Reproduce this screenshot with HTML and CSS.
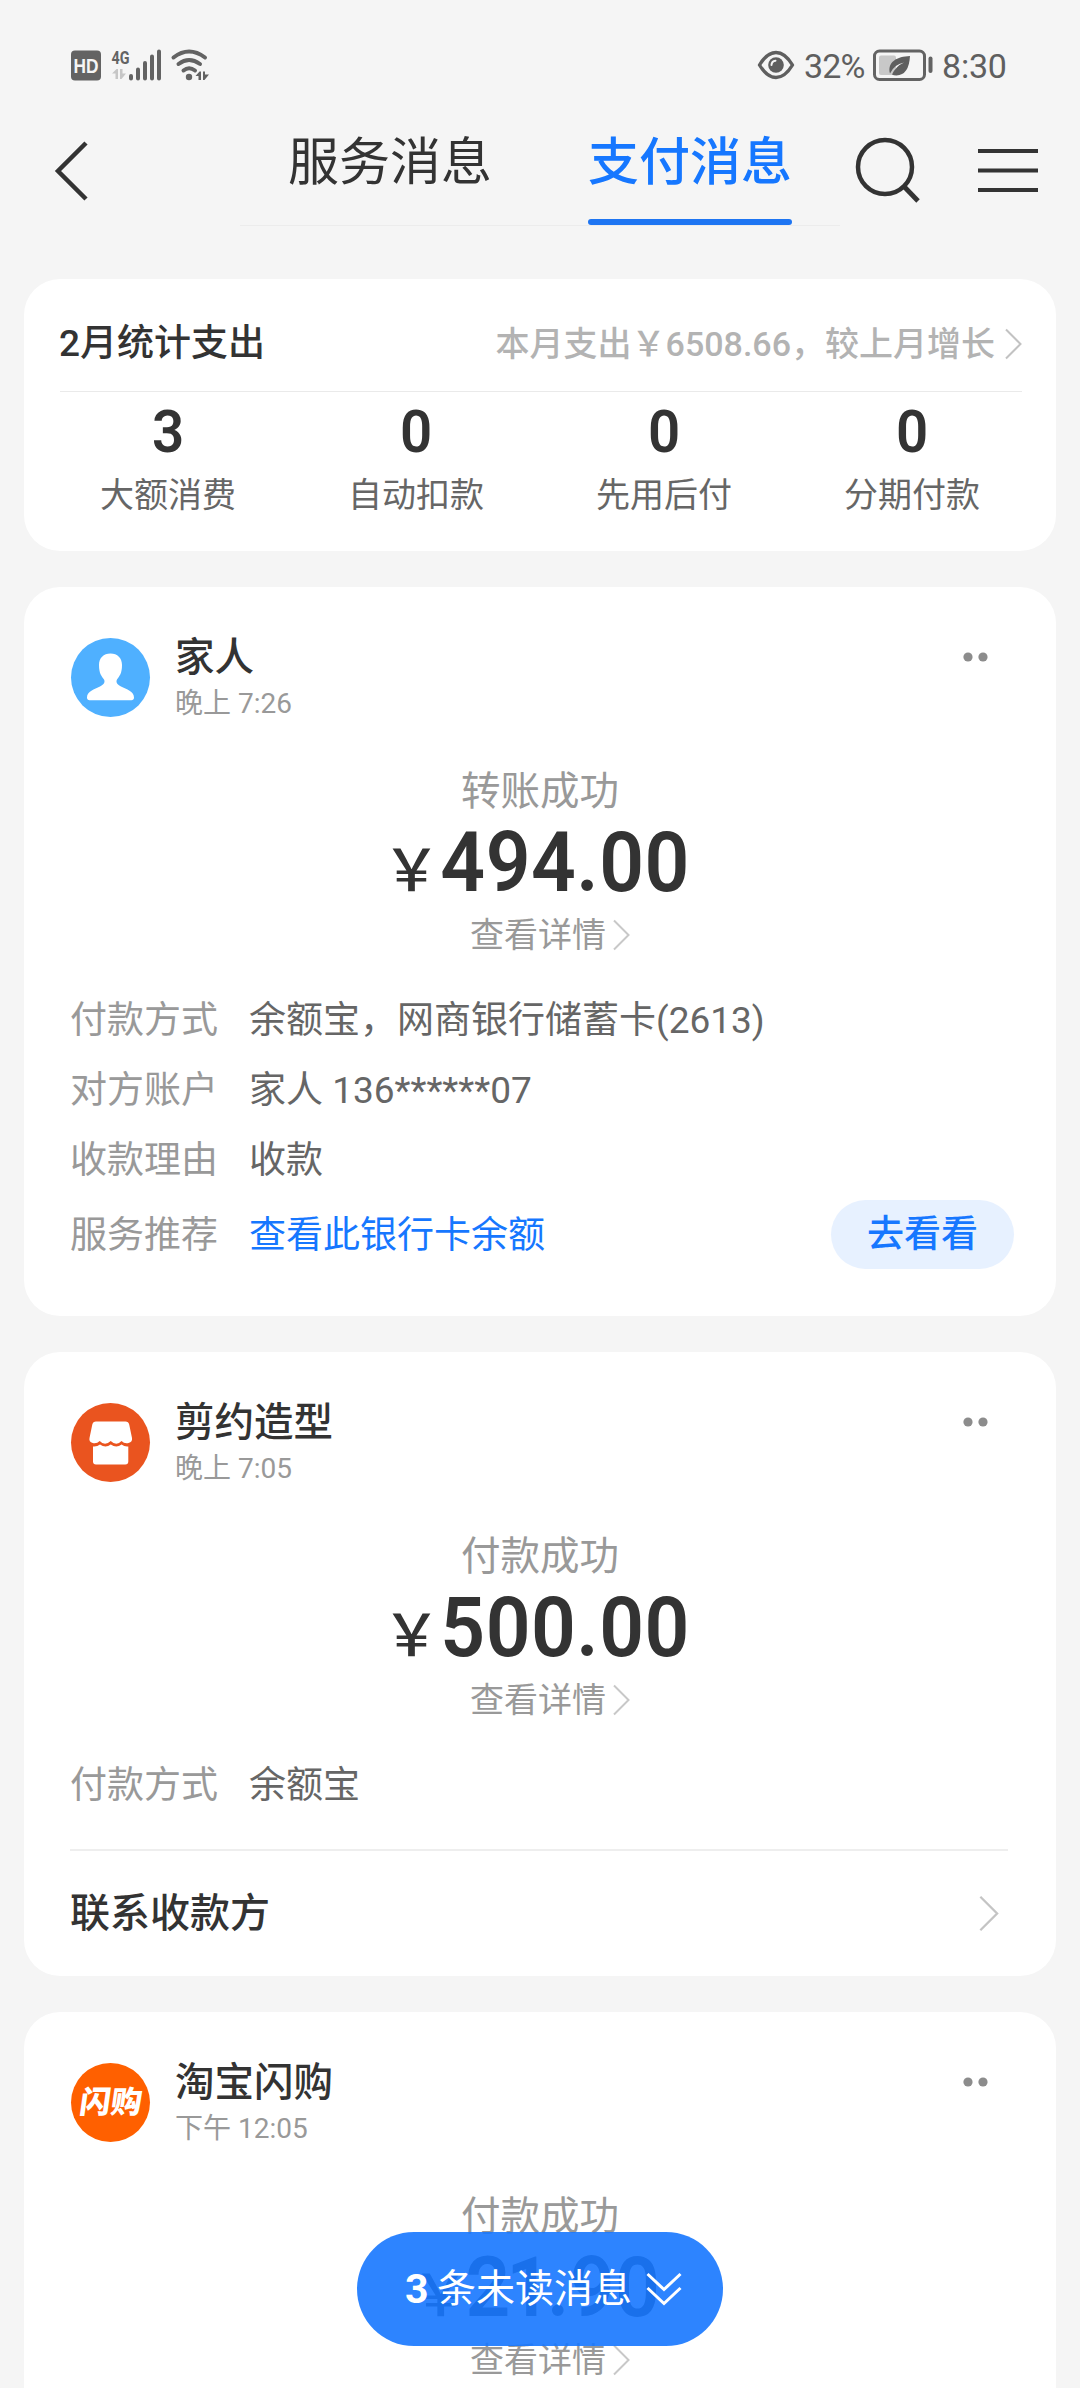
FILE: index.html
```html
<!DOCTYPE html>
<html lang="zh-CN">
<head>
<meta charset="utf-8">
<title>支付消息</title>
<link rel="stylesheet" href="styles.css">
</head>
<body>
<svg class="defs" width="0" height="0">
  <symbol id="chevron" viewBox="0 0 17 32"><path d="M1 1.5 15.5 16 1 30.5" fill="none" stroke="currentColor" stroke-width="2"/></symbol>
  <symbol id="dots" viewBox="0 0 26 10"><circle cx="5" cy="5" r="4.6" fill="currentColor"/><circle cx="20" cy="5" r="4.6" fill="currentColor"/></symbol>
</svg>

<div class="statusbar">
  <div class="status-left">
    <svg width="140" height="34" viewBox="0 0 140 34">
      <rect x="0" y="2.500" width="30" height="30" rx="4" fill="#636363"/>
      <text class="hd" x="2.6" y="24.7" textLength="25" lengthAdjust="spacingAndGlyphs">HD</text>
      <text class="net" x="40.5" y="15.500" textLength="18" lengthAdjust="spacingAndGlyphs">4G</text>
      <g fill="#c6c6c6">
        <path d="M41 25.500l4.5-4.5h1.5v10h-2.5V25.500zM49 21h2.500v4.500H55l-4.500 5.500H49z"/>
      </g>
      <g stroke="#636363" stroke-width="4" stroke-linecap="round">
        <path d="M60 28v2.500M67 21.500v9M74 15v15.500M81 8.500v22M88 3.500v27"/>
      </g>
      <g fill="none" stroke="#636363" stroke-width="4" stroke-linecap="round">
        <path d="M102.500 9.500Q118 -2.500 134 9.500"/>
        <path d="M107.500 16Q118 8 129 16"/>
        <path d="M112.500 22.500Q118 18 124 22.500"/>
      </g>
      <circle cx="118" cy="29" r="3.200" fill="#636363"/>
      <path d="M124.500 28l4-4.500h1.500v8.500h-2.500v-4zM132 23.500h2v3h4l-4.500 5.500H132z" fill="#636363"/>
    </svg>
  </div>
  <div class="status-right">
    <svg width="38" height="32" viewBox="0 0 38 32">
      <path d="M2.500 16Q10 3.500 19 3.500T35.500 16Q28 28.500 19 28.500T2.500 16z" fill="none" stroke="#5f5f5f" stroke-width="3.400" stroke-linejoin="round"/>
      <circle cx="19" cy="16" r="7.800" fill="#5f5f5f"/>
      <path d="M14.500 16a4.500 4.500 0 0 1 4-4.300" fill="none" stroke="#f5f5f5" stroke-width="2" stroke-linecap="round"/>
    </svg>
    <span class="battery-text">32%</span>
    <svg width="62" height="34" viewBox="0 0 62 34">
      <rect x="1.500" y="3" width="50" height="28.500" rx="5" fill="none" stroke="#636363" stroke-width="3"/>
      <rect x="6" y="7.500" width="17" height="19.500" rx="2" fill="#c8c8c8"/>
      <path d="M37 8Q36 27 23.500 27.500q-3 0-4.500-1Q23 18 31 14.500 21 16.500 17 25.500C14 14 24 8.500 37 8z" fill="#5f5f5f"/>
      <path d="M57.500 10.500v12.500" stroke="#636363" stroke-width="4" stroke-linecap="round"/>
    </svg>
    <span class="clock">8:30</span>
  </div>
</div>

<header class="nav">
  <svg class="back" width="36" height="60" viewBox="0 0 36 60"><path d="M34 2 6 30l28 28" fill="none" stroke="#333" stroke-width="4.500"/></svg>
  <nav class="tabs">
    <span class="tab">服务消息</span>
    <span class="tab tab-active">支付消息</span>
  </nav>
  <div class="nav-actions">
    <svg width="66" height="70" viewBox="0 0 66 70"><circle cx="31" cy="32" r="27" fill="none" stroke="#333" stroke-width="4.500"/><path d="M50.500 52 64 66" stroke="#333" stroke-width="4.800"/></svg>
    <svg width="60" height="46" viewBox="0 0 60 46"><path d="M0 3h60M0 22.500h60M0 42h60" stroke="#333" stroke-width="4.200"/></svg>
  </div>
</header>

<main class="feed">
  <section class="card stats">
    <div class="stats-head">
      <span class="stats-title">2月统计支出</span>
      <span class="stats-more">本月支出￥6508.66，较上月增长<svg class="chev" width="17" height="32"><use href="#chevron"/></svg></span>
    </div>
    <div class="stats-grid">
      <div class="stat"><b>3</b><span>大额消费</span></div>
      <div class="stat"><b>0</b><span>自动扣款</span></div>
      <div class="stat"><b>0</b><span>先用后付</span></div>
      <div class="stat"><b>0</b><span>分期付款</span></div>
    </div>
  </section>

  <section class="card bill">
    <div class="bill-head">
      <svg class="avatar" viewBox="0 0 79 79"><circle cx="39.500" cy="39.500" r="39.500" fill="#4fb0ff"/><path d="M39.500 15.500c-7 0-11.500 4.500-11.500 11.500 0 8.500 2.500 11 5 14.500 1.500 3-.5 5-4 7C23.500 51.500 16 53 16 59.500c0 2 1 2.700 2.500 2.700h42c1.500 0 2.500-.7 2.500-2.700 0-6.500-7.500-8-13-11-3.500-2-5.500-4-4-7 2.500-3.500 5-6 5-14.500 0-7-4.500-11.500-11.500-11.500z" fill="#fff"/></svg>
      <div class="who"><div class="name">家人</div><div class="time">晚上 7:26</div></div>
      <svg class="dots" width="26" height="10"><use href="#dots"/></svg>
    </div>
    <div class="result">转账成功</div>
    <div class="amount"><span class="yen">￥</span><span class="digits">494.00</span></div>
    <div class="detail">查看详情<svg class="chev" width="17" height="32"><use href="#chevron"/></svg></div>
    <div class="rows">
      <div class="row"><span class="label">付款方式</span><span class="value">余额宝，网商银行储蓄卡(2613)</span></div>
      <div class="row"><span class="label">对方账户</span><span class="value">家人 136******07</span></div>
      <div class="row"><span class="label">收款理由</span><span class="value">收款</span></div>
      <div class="row row-service"><span class="label">服务推荐</span><span class="value link">查看此银行卡余额</span><span class="button">去看看</span></div>
    </div>
  </section>

  <section class="card bill bill-contact">
    <div class="bill-head">
      <svg class="avatar" viewBox="0 0 79 79"><circle cx="39.500" cy="39.500" r="39.500" fill="#ea541f"/><path d="M25 18.500h29.500q3 0 3.700 3L61 35q.7 4-3.500 5-4 1-7-2-5 5.500-10.800 0-5.800 5.500-11 0-3 3-7 2-4-1-3.200-5L21.300 21.500q.7-3 3.700-3z" fill="#fff"/><path d="M22 43.500q4 .5 7-2 5.500 4 10.800 0 5.500 4 10.800 0 3 2.500 6.700 2v15q0 3-3 3H25q-3 0-3-3z" fill="#fff"/></svg>
      <div class="who"><div class="name">剪约造型</div><div class="time">晚上 7:05</div></div>
      <svg class="dots" width="26" height="10"><use href="#dots"/></svg>
    </div>
    <div class="result">付款成功</div>
    <div class="amount"><span class="yen">￥</span><span class="digits">500.00</span></div>
    <div class="detail">查看详情<svg class="chev" width="17" height="32"><use href="#chevron"/></svg></div>
    <div class="rows">
      <div class="row"><span class="label">付款方式</span><span class="value">余额宝</span></div>
    </div>
    <div class="contact">联系收款方<svg width="20" height="37"><use href="#chevron"/></svg></div>
  </section>

  <section class="card bill">
    <div class="bill-head">
      <div class="avatar avatar-flash"><span>闪购</span></div>
      <div class="who"><div class="name">淘宝闪购</div><div class="time">下午 12:05</div></div>
      <svg class="dots" width="26" height="10"><use href="#dots"/></svg>
    </div>
    <div class="result">付款成功</div>
    <div class="amount"><span class="yen">￥</span><span class="digits">2<span class="one">1</span>.90</span></div>
    <div class="detail">查看详情<svg class="chev" width="17" height="32"><use href="#chevron"/></svg></div>
  </section>
</main>

<div class="unread"><b>3</b><span>条未读消息</span><svg width="36" height="34" viewBox="0 0 36 34"><path d="M1.500 2 18 17.500 34.500 2M1.500 16 18 31.500 34.500 16" fill="none" stroke="#fff" stroke-width="3"/></svg></div>
</body>
</html>
```
FILE: styles.css
```css
* { box-sizing: border-box; }
body {
  margin: 0;
  width: 1080px;
  height: 2388px;
  overflow: hidden;
  position: relative;
  background: #f5f5f5;
  color: #333;
  font-family: Roboto, "Noto Sans CJK SC", sans-serif;
}
svg { display: block; flex: none; overflow: visible; }
.defs { position: absolute; }

.statusbar {
  height: 132px;
  padding: 48px 73px 0 71px;
  display: flex;
  justify-content: space-between;
  color: #5f5f5f;
}
.hd { font: 700 20px "Liberation Sans", sans-serif; fill: #f5f5f5; }
.net { font: 700 19px Roboto, sans-serif; fill: #636363; }
.status-right { display: flex; align-items: center; height: 34px; font-size: 34px; line-height: 34px; }
.battery-text { margin: 2px 0 0 9px; width: 69px; letter-spacing: -0.8px; }
.clock { margin: 2px 0 0 7px; width: 65px; letter-spacing: -0.2px; }
.battery-text, .clock { white-space: nowrap; font-weight: 400; }

.nav { height: 147px; display: flex; align-items: flex-start; }
.back { margin: 9px 0 0 52px; }
.tabs {
  display: flex;
  width: 600px;
  height: 94px;
  margin-left: 152px;
  border-bottom: 1px solid #ececec;
}
.tab { flex: 1; text-align: center; font-size: 51px; line-height: 62px; }
.tab-active { color: #1677ff; font-weight: 500; }
.tab-active::after {
  content: "";
  display: block;
  width: 204px;
  height: 6px;
  margin: 25px auto 0;
  border-radius: 3px;
  background: #1e75f2;
}
.nav-actions { display: flex; margin-left: 14px; gap: 58px; padding-top: 3px; }
.nav-actions svg + svg { margin-top: 13px; }

.feed { display: flex; flex-direction: column; gap: 36px; padding: 0 24px; }
.card { background: #fff; border-radius: 36px; flex: none; }

.stats { height: 272px; padding: 0 34px 0 36px; }
.stats-head {
  height: 113px;
  padding-top: 17px;
  border-bottom: 1px solid #eaeaea;
  display: flex;
  align-items: center;
  justify-content: space-between;
  line-height: 46px;
}
.stats-title { font-size: 37px; font-weight: 500; margin-left: -1px; }
.stats-more { display: flex; align-items: center; font-size: 34px; font-weight: 500; color: #b3b3b3; white-space: nowrap; }
.stats-more .chev { margin-left: 10px; height: 32px; color: #c2c2c2; }
.stats-grid { display: grid; grid-template-columns: repeat(4, 248px); margin-left: -16px; padding-top: 9px; }
.stat { display: flex; flex-direction: column; align-items: center; }
.stat b { font-size: 60px; line-height: 62px; font-weight: 600; transform: scaleX(.94); }
.stat span { font-size: 34px; line-height: 46px; margin-top: 9px; color: #666; }

.bill { padding: 47px 48px 40px; color: #333; }
.bill-head { display: flex; height: 88px; }
.avatar { width: 79px; height: 79px; margin: 4px 25px 0 -1px; }
.avatar-flash {
  border-radius: 50%;
  background: #ff6000;
  display: flex;
  align-items: center;
  justify-content: center;
}
.avatar-flash span { color: #fff; font-size: 31px; line-height: 40px; font-weight: 900; transform: skewX(-8deg); }
.who { flex: 1; }
.name { font-size: 39.500px; line-height: 46px; font-weight: 500; margin-top: 1px; }
.time { font-size: 28px; line-height: 36px; margin-top: 5px; color: #999; }
.dots { margin: 18px 19px 0 0; color: #8c8c8c; }
.result { margin-top: 42px; height: 56px; line-height: 56px; font-size: 39.500px; text-align: center; color: #999; }
.amount {
  margin-top: 1px;
  height: 84px;
  line-height: 84px;
  font-size: 84px;
  font-weight: 600;
  display: flex;
  justify-content: center;
  align-items: baseline;
  padding-left: 3px;
}
.yen { font-family: "Noto Sans CJK SC", sans-serif; font-size: 58px; font-weight: 500; margin-left: -11px; }
.digits { letter-spacing: .5px; transform: scaleX(.935); transform-origin: right; margin-left: -18px; }
.one { margin: 0 -5px; }
.detail {
  margin-top: 7px;
  height: 46px;
  line-height: 46px;
  font-size: 34px;
  color: #999;
  display: flex;
  justify-content: center;
  align-items: center;
  padding-left: 20px;
}
.detail .chev { margin-left: 7px; color: #c8c8c8; }
.rows { margin-top: 28px; }
.row { height: 70px; display: flex; align-items: center; font-size: 37px; line-height: 46px; margin: 0 -6px 0 -2px; }
.label { width: 179px; color: #999; }
.value { flex: 1; color: #666; white-space: nowrap; }
.row-service { height: 80px; }
.row .link { color: #1677ff; }
.button {
  width: 183px;
  height: 69px;
  margin-bottom: 3px;
  border-radius: 35px;
  background: #e7f1ff;
  color: #1677ff;
  font-size: 37px;
  font-weight: 500;
  line-height: 69px;
  text-align: center;
}
.bill-contact { padding-bottom: 0; }
.contact {
  margin: 28px 0 0 -2px;
  height: 127px;
  padding-right: 9px;
  border-top: 2px solid #eee;
  display: flex;
  align-items: center;
  justify-content: space-between;
  font-size: 40px;
  line-height: 46px;
  font-weight: 500;
}
.contact svg { color: #c4c4c4; }

/* floating pill over the feed */
.unread {
  position: absolute;
  left: 357px;
  top: 2232px;
  width: 366px;
  height: 114px;
  border-radius: 57px;
  background: rgba(22, 119, 255, .9);
  color: #fff;
  display: flex;
  align-items: center;
  padding-left: 48px;
  font-size: 39px;
  line-height: 46px;
}
.unread b { font-size: 41px; font-weight: 700; width: 32px; }
.unread svg { margin-left: 14px; }
```
